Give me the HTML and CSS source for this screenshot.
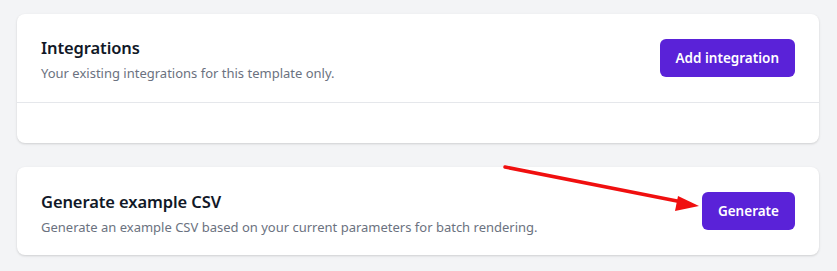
FILE: index.html
```html
<!DOCTYPE html>
<html lang="en">
<head>
  <meta charset="UTF-8" />
  <title>Template settings</title>
  <link rel="stylesheet" href="styles.css">
</head>
<body>
  <div class="page">
    <!-- Integrations -->
    <div class="card">
      <div class="card-head">
        <div class="card-text">
          <h2>Integrations</h2>
          <p>Your existing integrations for this template only.</p>
        </div>
        <button class="btn">Add integration</button>
      </div>
      <div class="card-body"></div>
    </div>

    <!-- Example CSV -->
    <div class="card">
      <div class="card-head csv">
        <div class="card-text">
          <h2>Generate example CSV</h2>
          <p>Generate an example CSV based on your current parameters for batch rendering.</p>
        </div>
        <button class="btn">Generate</button>
      </div>
    </div>

    <svg class="arrow" width="837" height="271" viewBox="0 0 837 271">
      <line x1="505" y1="167" x2="682" y2="202" stroke="#f00f0f" stroke-width="3.5" stroke-linecap="round" />
      <polygon points="699,206 678,196 675,211" fill="#f00f0f" />
    </svg>
  </div>
</body>
</html>
```

FILE: styles.css
```css
html, body {
  margin: 0;
  padding: 0;
}
body {
  background-color: #f3f4f6;
  font-family: "Noto Sans", "Open Sans", sans-serif;
  color: #111827;
}
.page {
  position: relative;
  padding: 14px 18px 16px 17px;
  display: flex;
  flex-direction: column;
  gap: 24px;
}
.card {
  background-color: white;
  border-radius: 8px;
  box-shadow: 0 1px 3px rgba(0,0,0,0.1), 0 1px 2px rgba(0,0,0,0.06);
}
.card-head {
  display: flex;
  justify-content: space-between;
  align-items: center;
  padding: 0 24px;
  height: 88px;
}
.card-text {
  padding-top: 2px;
}
.card-head.csv .card-text {
  padding-top: 4px;
}
.card-body {
  border-top: 1px solid #e5e7eb;
  height: 40px;
}
h2 {
  margin: 0;
  font-size: 16.5px;
  font-weight: 600;
  line-height: 22px;
  letter-spacing: -0.1px;
}
p {
  margin: 5px 0 0 0;
  font-size: 13px;
  color: #6b7280;
  line-height: 18px;
}
.btn {
  height: 38px;
  padding: 0 16px;
  background-color: #5a22d8;
  color: white;
  border: none;
  border-radius: 6px;
  font-family: inherit;
  font-size: 13.5px;
  font-weight: 600;
  cursor: pointer;
}
.btn:hover {
  background-color: #4c1bc0;
}
.arrow {
  position: absolute;
  left: 0;
  top: 0;
  pointer-events: none;
}
```
